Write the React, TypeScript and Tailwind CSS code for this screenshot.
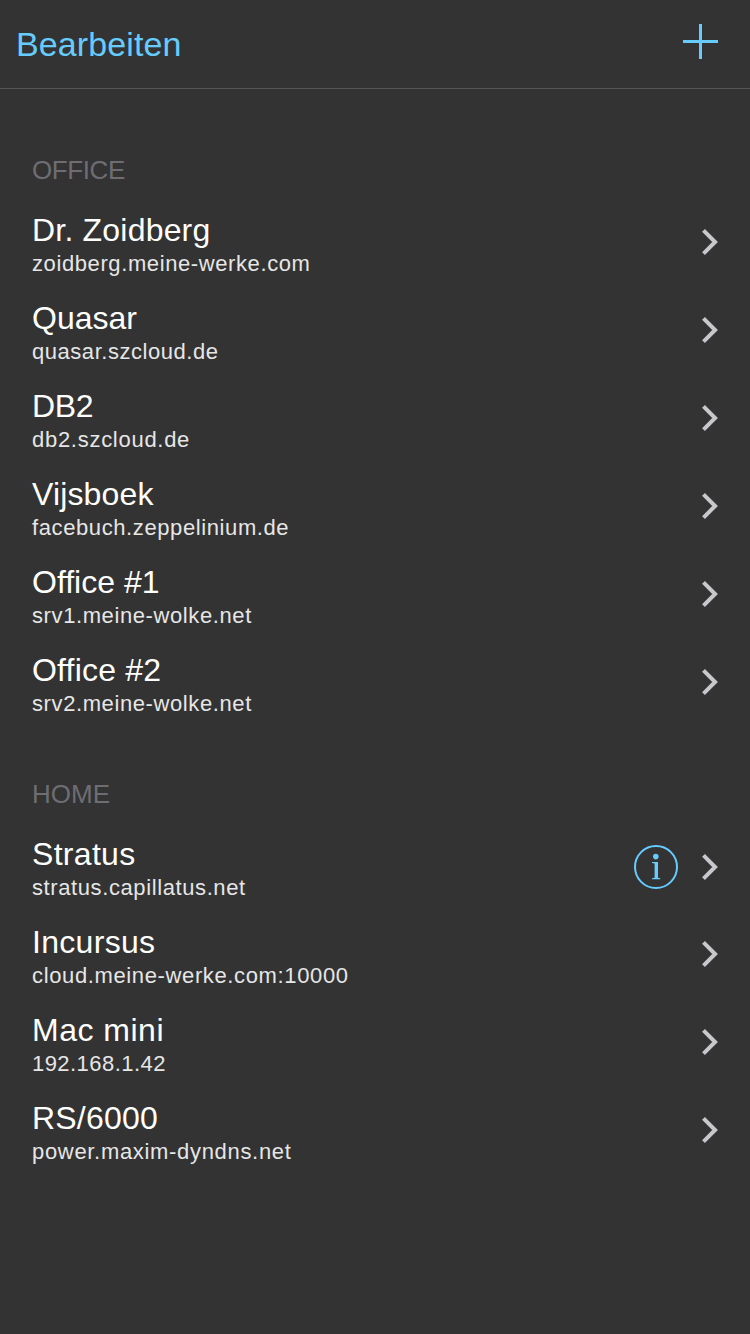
type Server = { name: string; host: string; nameClass?: string; hostClass?: string; info?: boolean };

const office: Server[] = [
  { name: "Dr. Zoidberg", host: "zoidberg.meine-werke.com", nameClass: "tracking-[0.2px]", hostClass: "tracking-[0.6px]" },
  { name: "Quasar", host: "quasar.szcloud.de", hostClass: "tracking-[0.54px]" },
  { name: "DB2", host: "db2.szcloud.de", nameClass: "tracking-[-0.3px]", hostClass: "tracking-[0.72px]" },
  { name: "Vijsboek", host: "facebuch.zeppelinium.de", nameClass: "tracking-[0.15px]", hostClass: "tracking-[0.6px]" },
  { name: "Office #1", host: "srv1.meine-wolke.net" },
  { name: "Office #2", host: "srv2.meine-wolke.net", nameClass: "tracking-[0.2px]" },
];

const home: Server[] = [
  { name: "Stratus", host: "stratus.capillatus.net", nameClass: "tracking-[0.3px]", info: true },
  { name: "Incursus", host: "cloud.meine-werke.com:10000", nameClass: "tracking-[0.3px]", hostClass: "tracking-[0.63px]" },
  { name: "Mac mini", host: "192.168.1.42", nameClass: "tracking-[0.5px]", hostClass: "tracking-[0.45px]" },
  { name: "RS/6000", host: "power.maxim-dyndns.net", nameClass: "tracking-[0.2px]", hostClass: "tracking-[0.68px]" },
];

function Chevron() {
  return (
    <svg width="18" height="28" viewBox="0 0 18 28" fill="none" stroke="#c7c7cc" strokeWidth="4">
      <path d="M2.5 2.4 14.1 14 2.5 25.6" />
    </svg>
  );
}

function Info() {
  return (
    <svg width="44" height="44" viewBox="0 0 44 44" fill="none">
      <circle cx="22" cy="22" r="21" stroke="#66ccff" strokeWidth="2" />
      <circle cx="21.8" cy="11.6" r="2.8" fill="#66ccff" />
      <path d="M18 17h6v15.8l2.2.4v1H18v-1l2.6-.4V18.6L18 18.1z" fill="#66ccff" />
    </svg>
  );
}

function Row({ server }: { server: Server }) {
  return (
    <li className="flex h-[88px] items-center justify-between pr-[31px] pl-8">
      <div className="pt-0.5">
        <div className={`text-[32px] leading-[38px] text-white ${server.nameClass ?? ""}`}>{server.name}</div>
        <div className={`text-[22px] leading-[29px] text-[#e6e6e6] ${server.hostClass ?? "tracking-[0.6px]"}`}>{server.host}</div>
      </div>
      <div className={server.info ? "flex items-center gap-[23px]" : "flex items-center pb-0.5"}>
        {server.info && <Info />}
        <Chevron />
      </div>
    </li>
  );
}

function Section({ title, servers, titleClass }: { title: string; servers: Server[]; titleClass: string }) {
  return (
    <section>
      <h2 className={`pl-8 text-[26px] leading-[36px] text-[#6d6d72] ${titleClass}`}>{title}</h2>
      <ul>
        {servers.map((s) => (
          <Row key={s.name} server={s} />
        ))}
      </ul>
    </section>
  );
}

export default function App() {
  return (
    <main className="h-[1334px] w-[750px] overflow-hidden bg-[#333333] font-['Liberation_Sans',sans-serif]">
      <header className="flex h-[89px] items-center justify-between border-b border-[#555555] pr-8 pl-4">
        <button className="text-[34px] tracking-[0.1px] text-[#66ccff]">Bearbeiten</button>
        <svg className="mb-[5px]" width="35" height="35" viewBox="0 0 35 35" stroke="#66ccff" strokeWidth="3">
          <path d="M0 17.5h35M17.5 0v35" />
        </svg>
      </header>
      <Section title="OFFICE" servers={office} titleClass="pt-[63px] pb-[11px] tracking-[-0.4px]" />
      <Section title="HOME" servers={home} titleClass="pt-[49px] pb-[11px]" />
    </main>
  );
}
